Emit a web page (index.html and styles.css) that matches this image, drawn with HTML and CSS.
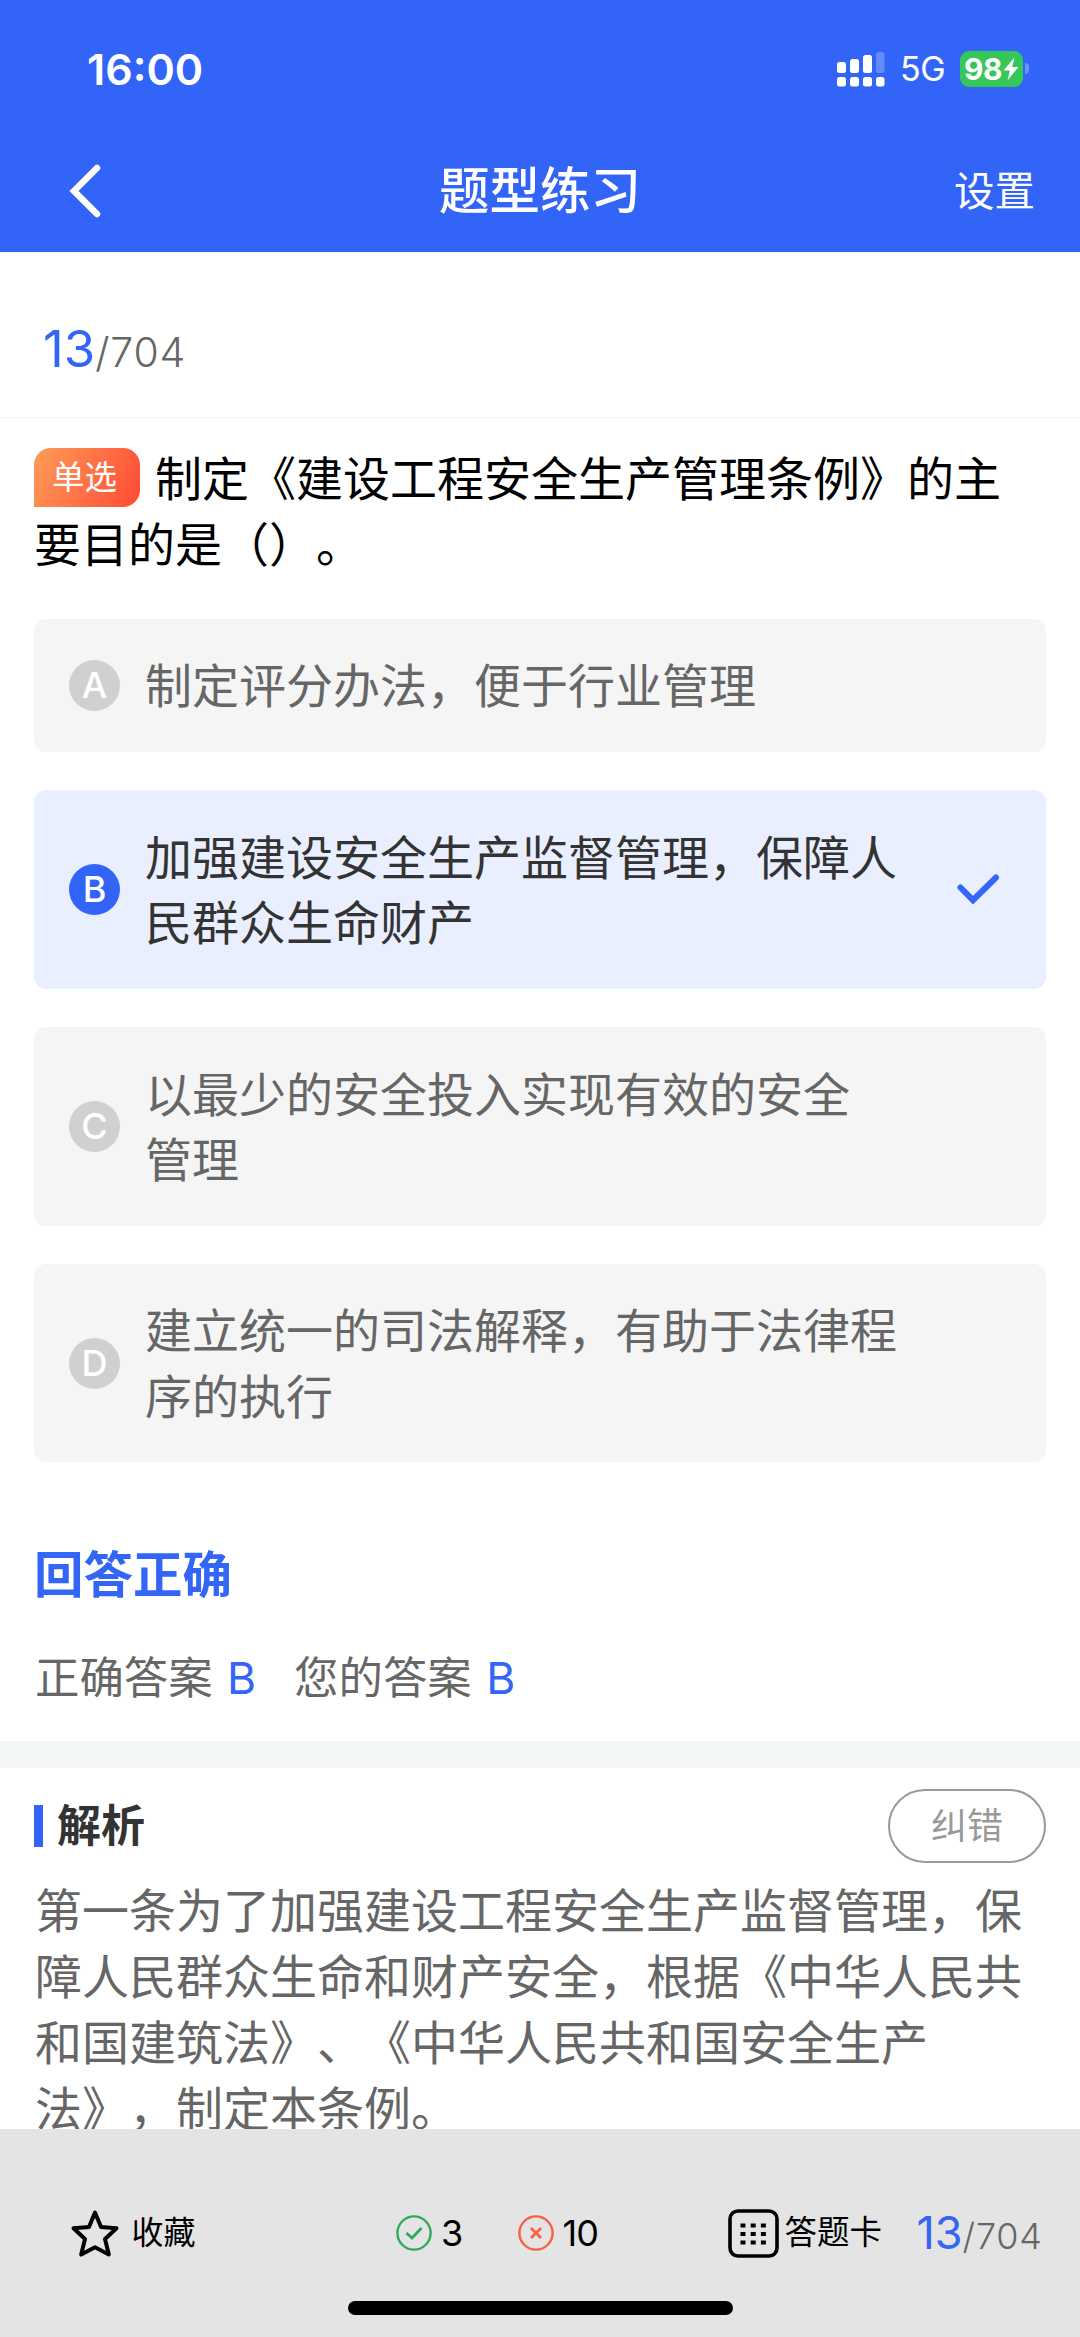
FILE: index.html
```html
<!DOCTYPE html>
<html lang="zh-CN">
<head>
<meta charset="utf-8">
<title>题型练习</title>
<link rel="stylesheet" href="styles.css">
</head>
<body>
<div class="page">
  <header class="header">
    <div class="status">
      <span class="time">16:00</span>
      <div class="status-right">
        <svg class="signal" width="49" height="36" viewBox="0 0 49 36" fill="#fff">
          <rect x="0" y="11" width="9" height="11" rx="2.5"/>
          <rect x="13" y="8" width="9" height="14" rx="2.5"/>
          <rect x="26" y="4" width="9" height="18" rx="2.5"/>
          <rect x="39" y="1" width="8.5" height="21" rx="2.5" opacity=".25"/>
          <rect x="0" y="26" width="9" height="9.5" rx="2.5"/>
          <rect x="13" y="26" width="9" height="9.5" rx="2.5"/>
          <rect x="26" y="26" width="9" height="9.5" rx="2.5"/>
          <rect x="39" y="26" width="8.5" height="9.5" rx="2.5"/>
        </svg>
        <span class="net">5G</span>
        <div class="battery">
          <span>98</span>
          <svg width="16" height="24" viewBox="0 0 16 24"><path d="M11.5 0.5 0.5 13.5H6.8L4.5 23.5 15.5 10H9.2Z" fill="#fff"/></svg>
        </div>
        <i class="nub"></i>
      </div>
    </div>
    <nav class="nav">
      <svg class="back" width="36" height="56" viewBox="0 0 36 56"><path d="M30 5 7 28 30 51" fill="none" stroke="#fff" stroke-width="6.5" stroke-linecap="round" stroke-linejoin="miter"/></svg>
      <h1>题型练习</h1>
      <span class="settings">设置</span>
    </nav>
  </header>

  <main class="main">
    <div class="progress"><b>13</b><span>/704</span></div>

    <section class="quiz">
      <p class="question"><span class="tag">单选</span>制定《建设工程安全生产管理条例》的主<br>要目的是（）。</p>
      <div class="options">
        <div class="option"><i class="key">A</i><p>制定评分办法，便于行业管理</p></div>
        <div class="option selected"><i class="key">B</i><p>加强建设安全生产监督管理，保障人<br>民群众生命财产</p>
          <svg class="tick" width="44" height="32" viewBox="0 0 44 32"><path d="M4.5 14.5 17 27.2 40 4.5" fill="none" stroke="#3366f6" stroke-width="6" stroke-linecap="round"/></svg>
        </div>
        <div class="option"><i class="key">C</i><p>以最少的安全投入实现有效的安全<br>管理</p></div>
        <div class="option"><i class="key">D</i><p>建立统一的司法解释，有助于法律程<br>序的执行</p></div>
      </div>
      <h2 class="result">回答正确</h2>
      <div class="answers">
        <span>正确答案 <b>B</b></span>
        <span>您的答案 <b>B</b></span>
      </div>
    </section>

    <section class="analysis">
      <div class="analysis-head">
        <h3>解析</h3>
        <span class="report">纠错</span>
      </div>
      <p>第一条为了加强建设工程安全生产监督管理，保<br>障人民群众生命和财产安全，根据《中华人民共<br>和国建筑法》、《中华人民共和国安全生产<br>法》，制定本条例。</p>
    </section>
  </main>

  <footer class="footer">
    <div class="tools">
      <div class="favorite">
        <svg width="50" height="50" viewBox="0 0 50 50"><path d="M25 4.5 31 19 46.5 20.2 35 31 38.8 46.5 25 39.3 11.2 46.5 15 31 3.5 20.2 19 19Z" fill="none" stroke="#000" stroke-width="4" stroke-linejoin="round"/></svg>
        <span>收藏</span>
      </div>
      <div class="count right">
        <svg width="36" height="36" viewBox="0 0 36 36" fill="none" stroke="#2fab5d" stroke-width="2.4"><circle cx="18" cy="18" r="16.6"/><path d="M10.5 18 16 23 25.5 13" stroke-width="2.8"/></svg>
        <span>3</span>
      </div>
      <div class="count wrong">
        <svg width="36" height="36" viewBox="0 0 36 36" fill="none" stroke="#f5623f" stroke-width="2.4"><circle cx="18" cy="18" r="16.6"/><path d="M13 13 23 23M23 13 13 23" stroke-width="2.8"/></svg>
        <span>10</span>
      </div>
      <div class="card">
        <svg width="51" height="49" viewBox="0 0 51 49"><rect x="2" y="2" width="47" height="45" rx="8" fill="none" stroke="#000" stroke-width="3.6"/><path d="M12.5 16.5h5m5.2 0h5m5.2 0h5M12.5 25h5m5.2 0h5m5.2 0h5M12.5 33.5h5m5.2 0h5m5.2 0h5" stroke="#000" stroke-width="4.2"/></svg>
        <span>答题卡</span>
      </div>
      <div class="progress small"><b>13</b><span>/704</span></div>
    </div>
    <div class="home"></div>
  </footer>
</div>
</body>
</html>
```
FILE: styles.css
```css
* { box-sizing: border-box; margin: 0; padding: 0; }

body {
  background: #fff;
  color: #000;
  font-family: Inter, "Noto Sans CJK SC", sans-serif;
  text-spacing-trim: space-all;
}

i { font-style: normal; }
svg { display: block; flex: none; }

.page {
  display: flex;
  flex-direction: column;
  width: 1080px;
  height: 2337px;
  overflow: hidden;
}

/* header */
.header { flex: none; height: 252px; background: #3265f7; color: #fff; }

.status {
  display: flex;
  justify-content: space-between;
  align-items: center;
  height: 137px;
  padding: 0 51px 0 87px;
}
.time { font-size: 43px; font-weight: 600; line-height: 50px; }
.status-right { display: flex; align-items: center; }
.net { width: 60px; padding-left: 14px; font-size: 34px; line-height: 40px; letter-spacing: -0.5px; }
.battery {
  display: flex;
  align-items: center;
  justify-content: center;
  gap: 1px;
  width: 63px;
  height: 36px;
  margin-left: 14px;
  border-radius: 9px;
  background: #36c759;
  font-size: 30px;
  font-weight: 700;
  letter-spacing: -0.5px;
}
.nub { width: 4px; height: 11px; margin-left: 2px; border-radius: 0 5px 5px 0; background: rgba(255, 255, 255, .3); }

.nav {
  display: grid;
  grid-template-columns: 1fr auto 1fr;
  align-items: center;
  height: 107px;
  padding: 0 45px 0 67px;
}
.nav h1 { font-size: 50.5px; font-weight: 500; line-height: 60px; padding-right: 22px; }
.settings { justify-self: end; font-size: 40.5px; line-height: 48px; padding-top: 3px; }

/* main */
.main { flex: 1; min-height: 0; overflow: hidden; }

.progress { display: flex; align-items: baseline; color: #666; }
.progress b { color: #3366f6; font-weight: 400; }
.progress span { letter-spacing: 0.8px; }
.main > .progress {
  height: 166px;
  padding: 67px 0 0 43px;
  border-bottom: 1px solid #f5f5f5;
  font-size: 41px;
  line-height: 60px;
  font-weight: 350;
}
.main > .progress b { font-size: 51px; }

.quiz { padding: 28px 34px 0; }
.question, .option p, .analysis p { font-size: 47px; line-height: 65.8px; white-space: nowrap; }

.tag {
  display: inline-flex;
  align-items: center;
  justify-content: center;
  width: 106px;
  height: 59px;
  margin: 2px 15px 0 0;
  padding-right: 5px;
  border-radius: 17px 17px 17px 0;
  background: linear-gradient(115deg, #ff9c58, #ff4a35);
  color: #fff;
  font-size: 32.5px;
  line-height: 40px;
  vertical-align: top;
}

.options { display: grid; gap: 38.6px; margin-top: 41.4px; }
.option {
  display: flex;
  align-items: center;
  padding: 33.4px 35px;
  border-radius: 12px;
  background: #f5f5f5;
  color: #666;
}
.option p { margin: 1px 0 -1px; }
.key {
  display: flex;
  flex: none;
  align-items: center;
  justify-content: center;
  width: 51px;
  height: 51px;
  margin-right: 25px;
  border-radius: 50%;
  background: #d1cfd0;
  color: #fff;
  font-size: 36px;
  font-weight: 500;
  line-height: 40px;
}
.selected { background: #e9effe; color: #333; }
.selected .key { background: #3265f7; }
.tick { margin-left: auto; margin-right: 11px; }

.result { margin-top: 83px; color: #3366f6; font-size: 49.5px; font-weight: 700; line-height: 60px; }
.answers { display: flex; gap: 38px; margin-top: 43px; padding-left: 1px; color: #666; font-size: 44.4px; line-height: 60px; word-spacing: 2px; }
.answers b { color: #3366f6; font-weight: 400; }

.analysis { margin-top: 33px; padding: 21px 34px 0; border-top: 27px solid #f3f7f8; }
.analysis-head { display: flex; justify-content: space-between; align-items: center; height: 74px; }
.analysis h3 {
  padding-left: 14px;
  border-left: 9px solid #3265f7;
  color: #333;
  font-size: 44px;
  font-weight: 700;
  line-height: 42px;
}
.report {
  width: 158px;
  height: 74px;
  border: 2px solid #999;
  border-radius: 37px;
  color: #999;
  font-size: 36px;
  line-height: 70px;
  text-align: center;
}
.analysis p { margin-top: 15px; padding-left: 1px; color: #666; }

/* footer */
.footer { flex: none; height: 208px; padding-top: 68px; background: #e4e4e4; }
.tools { display: flex; align-items: center; height: 72px; padding-left: 69.5px; }
.favorite, .count, .card { display: flex; align-items: center; line-height: 40px; }
.favorite { width: 326.5px; gap: 12px; font-size: 32px; }
.count { gap: 9px; font-size: 36px; }
.right { width: 121.5px; }
.wrong { width: 210px; }
.wrong span { letter-spacing: -1px; }
.card { width: 189px; gap: 6px; font-size: 32.5px; white-space: nowrap; }
.favorite span, .card span { padding-bottom: 1px; }
.small { padding-top: 2px; font-size: 36px; line-height: 50px; font-weight: 350; }
.small b { font-size: 45px; }

.home { width: 385px; height: 14px; margin: 32px auto 0; border-radius: 7px; background: #000; }
```
